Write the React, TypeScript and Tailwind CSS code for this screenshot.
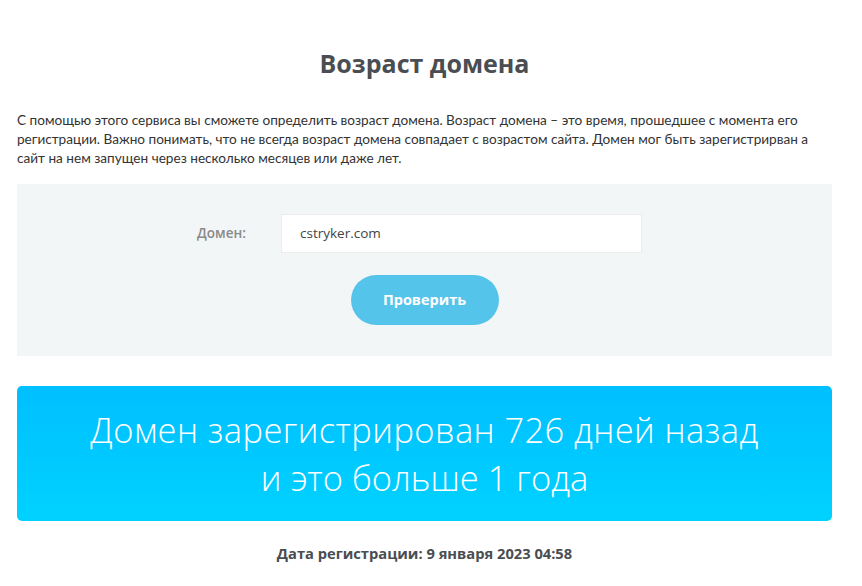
import React from "react";

export default function App() {
  return (
    <div className="min-h-[586px] bg-white" style={{ fontFamily: "'Open Sans', sans-serif" }}>
      <div className="ml-[17px] w-[815px] pt-[46px]">
        <h1 className="text-center text-[25px] leading-[34px] font-bold text-[#4a4d52]">Возраст домена</h1>
        <p className="mt-[31px] text-[13.6px] leading-[19px] text-[#333]" style={{ fontFamily: "Lato, sans-serif" }}>
          С помощью этого сервиса вы сможете определить возраст домена. Возраст домена – это время, прошедшее с момента его регистрации. Важно понимать, что не всегда возраст домена совпадает с возрастом сайта. Домен мог быть зарегистрирван а сайт на нем запущен через несколько месяцев или даже лет.
        </p>
        <div className="mt-[16px] h-[172px] bg-[#f3f6f6] pt-[30px] flex flex-col items-center">
          <div className="flex items-center pr-[10px]">
            <label className="w-[50px] text-[13.5px] font-semibold text-[#8a8a8a] mr-[34px] whitespace-nowrap">Домен:</label>
            <div className="w-[361px] h-[39px] bg-white border border-[#ececec] flex items-center pl-[18px] text-[13.5px] text-[#444]">
              cstryker.com
            </div>
          </div>
          <button className="mt-[22px] w-[148px] h-[50px] rounded-full bg-[#55c4eb] text-white text-[14.5px] font-bold">
            Проверить
          </button>
        </div>
        <div className="mt-[30px] h-[135px] rounded-[5px] bg-gradient-to-b from-[#00bfff] to-[#00d2ff] flex flex-col items-center justify-center text-white text-[34.5px] leading-[48px] font-light">
          <div className="tracking-[0.4px]">Домен зарегистрирован 726 дней назад</div>
          <div>и это больше 1 года</div>
        </div>
        <div className="mt-[21px] text-center text-[14.7px] font-bold text-[#4a4d52]">Дата регистрации: 9 января 2023 04:58</div>
      </div>
    </div>
  );
}
